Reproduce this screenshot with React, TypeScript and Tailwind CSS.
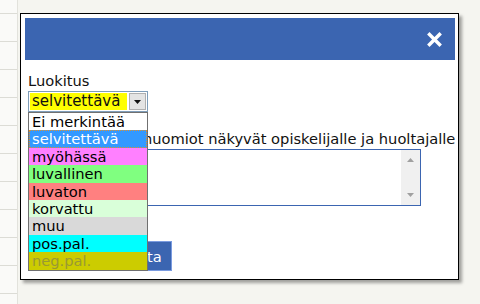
import React from 'react';

const options = [
  { label: 'Ei merkintää', cls: 'bg-white text-black' },
  { label: 'selvitettävä', cls: 'bg-[#3399ff] text-white outline-1 outline-dotted outline-[#e0902a] -outline-offset-1' },
  { label: 'myöhässä', cls: 'bg-[#ff80ff] text-black' },
  { label: 'luvallinen', cls: 'bg-[#80ff80] text-black' },
  { label: 'luvaton', cls: 'bg-[#ff8080] text-black' },
  { label: 'korvattu', cls: 'bg-[#d9ffd9] text-black' },
  { label: 'muu', cls: 'bg-[#d9d9d9] text-black' },
  { label: 'pos.pal.', cls: 'bg-[#00ffff] text-black' },
  { label: 'neg.pal.', cls: 'bg-[#cccc00] text-[#999933]' },
];

const App: React.FC = () => {
  const rows = Array.from({ length: 11 });

  return (
    <div className="relative w-[480px] h-[304px] overflow-hidden bg-[#f5f5f0] font-['DejaVu_Sans',Verdana,sans-serif] text-[14.67px] text-[#111]">
      {/* background list column */}
      <div className="w-[18px] h-full bg-[#fafaf8] border-r border-[#e2e2dc] pt-[13px] flex flex-col">
        {rows.map((_, i) => (
          <div key={i} className="h-[28px] shrink-0 border-t border-[#dcdcd6]" />
        ))}
      </div>

      {/* dialog */}
      <div className="absolute left-[20px] top-[13px] w-[439px] h-[267px] bg-white border border-black shadow-[3px_3px_3px_rgba(0,0,0,0.35)] pt-[4px] pl-[4px]">
        <div className="w-[430px] h-[42px] bg-[#3b65b1] flex items-center justify-end pr-[13px]">
          <svg width="15" height="15" viewBox="0 0 15 15">
            <path d="M2.5 2.5 L12.5 12.5 M12.5 2.5 L2.5 12.5" stroke="white" strokeWidth="3.4" strokeLinecap="square" />
          </svg>
        </div>

        <div className="pl-[3px] pt-[12px] leading-[17px]">Luokitus</div>

        {/* select */}
        <div className="relative ml-[3px] mt-[2px] w-[120px] h-[21px] border border-[#7f9db9] bg-white flex items-center p-[1px] gap-[2px]">
          <div className="flex-1 h-full bg-[#ffff00] pl-[2px] text-[15px] leading-[17px]">selvitettävä</div>
          <div className="w-[17px] h-full bg-[#e4e4e4] border border-[#b0b0b0] flex items-center justify-center">
            <svg width="7" height="4" viewBox="0 0 7 4">
              <path d="M0 0 L7 0 L3.5 4 Z" fill="#111" />
            </svg>
          </div>

          {/* open dropdown list */}
          <div className="absolute -left-px top-[20px] w-[120px] border border-[#707070] bg-white z-10 flex flex-col">
            {options.map((o) => (
              <div key={o.label} className={`h-[17.4px] leading-[17px] pl-[3px] whitespace-nowrap ${o.cls}`}>
                {o.label}
              </div>
            ))}
          </div>
        </div>

        <div className="pl-[3px] mt-[18px] leading-[17px] whitespace-nowrap">
          Lisätiedot sekä huomiot näkyvät opiskelijalle ja huoltajalle
        </div>

        {/* textarea */}
        <div className="ml-[3px] mt-[2px] w-[393px] h-[57px] border border-[#3b65b1] flex justify-end">
          <div className="w-[19px] h-full bg-[#f0f0f0] flex flex-col items-center justify-between py-[8px]">
            <svg width="7" height="4" viewBox="0 0 7 4">
              <path d="M3.5 0 L7 4 L0 4 Z" fill="#a0a0a0" />
            </svg>
            <svg width="7" height="4" viewBox="0 0 7 4">
              <path d="M0 0 L7 0 L3.5 4 Z" fill="#a0a0a0" />
            </svg>
          </div>
        </div>

        <div className="mt-[35px] pl-[83px]">
          <button className="h-[30px] px-[9px] bg-[#3b65b1] text-white border border-[#7a9be0] leading-[17px]">
            Poista
          </button>
        </div>
      </div>
    </div>
  );
};

export default App;
